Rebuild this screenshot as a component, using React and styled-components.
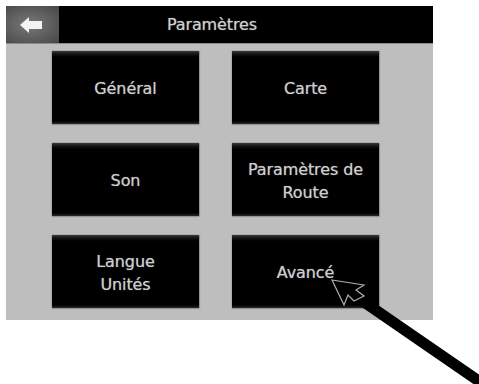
import React from "react";
import styled, { createGlobalStyle } from "styled-components";

const GlobalStyle = createGlobalStyle`
  html, body {
    margin: 0;
    padding: 0;
    background: #ffffff;
  }
  body {
    font-family: "DejaVu Sans", Verdana, sans-serif;
    width: 479px;
    height: 384px;
    overflow: hidden;
  }
`;

const items = [
  ["Général"],
  ["Carte"],
  ["Son"],
  ["Paramètres de", "Route"],
  ["Langue", "Unités"],
  ["Avancé"],
];

const App = () => {
  return (
    <>
      <GlobalStyle />
      <Page>
        <Screen>
          <Header>
            <BackButton>
              <svg width="24" height="18" viewBox="0 0 24 18">
                <path d="M1 9 L10 1 L10 5 L23 5 L23 13 L10 13 L10 17 Z" fill="#f4f4f4" />
              </svg>
            </BackButton>
            <Title>Paramètres</Title>
          </Header>
          <Grid>
            {items.map((lines) => (
              <MenuButton key={lines.join(" ")}>
                {lines.map((l) => (
                  <Line key={l}>{l}</Line>
                ))}
              </MenuButton>
            ))}
          </Grid>
        </Screen>
        <Pointer width="479" height="384" viewBox="0 0 479 384">
          <line x1="348" y1="291" x2="486" y2="386" stroke="#000" strokeWidth="11" />
          <path
            d="M332 280 L364 285 L356 290 L364 296 L354 301 L348 295 L344 305 Z"
            fill="#000"
            stroke="#b0b0b0"
            strokeWidth="1.2"
          />
        </Pointer>
      </Page>
    </>
  );
};

const Page = styled.div`
  position: relative;
  width: 479px;
  height: 384px;
  padding: 6px 0 0 6px;
  box-sizing: border-box;
`;

const Screen = styled.div`
  width: 427px;
  height: 314px;
  background: #bebebe;
  display: flex;
  flex-direction: column;
`;

const Header = styled.div`
  display: flex;
  height: 37px;
  background: #000;
  border-bottom: 1px solid #8a8a8a;
`;

const BackButton = styled.div`
  width: 53px;
  display: flex;
  align-items: center;
  justify-content: center;
  padding-right: 4px;
  box-sizing: border-box;
  background: radial-gradient(ellipse at 45% 50%, #7a7a7a 0%, #5d5d5d 55%, #474747 100%);
`;

const Title = styled.div`
  flex: 1;
  display: flex;
  align-items: center;
  justify-content: center;
  padding-right: 68px;
  color: #d0d0d0;
  font-size: 16px;
  letter-spacing: -0.1px;
  text-shadow: 0 0 1px rgba(220, 220, 220, 0.6);
`;

const Grid = styled.div`
  display: grid;
  grid-template-columns: 147px 147px;
  grid-auto-rows: 73px;
  column-gap: 33px;
  row-gap: 19px;
  padding: 7px 0 0 46px;
`;

const MenuButton = styled.div`
  display: flex;
  flex-direction: column;
  align-items: center;
  justify-content: center;
  background: linear-gradient(#3a3a3a 0px, #141414 3px, #000 6px, #000 calc(100% - 3px), #2a2a2a 100%);
  box-shadow: 0 0 1.5px 0.5px rgba(0, 0, 0, 0.7);
  color: #cfcfcf;
  font-size: 16px;
  letter-spacing: -0.1px;
  text-shadow: 0 0 1px rgba(220, 220, 220, 0.6);
  padding-top: 2px;
  box-sizing: border-box;
`;

const Line = styled.span`
  line-height: 23px;
`;

const Pointer = styled.svg`
  position: absolute;
  left: 0;
  top: 0;
  pointer-events: none;
`;

export default App;
